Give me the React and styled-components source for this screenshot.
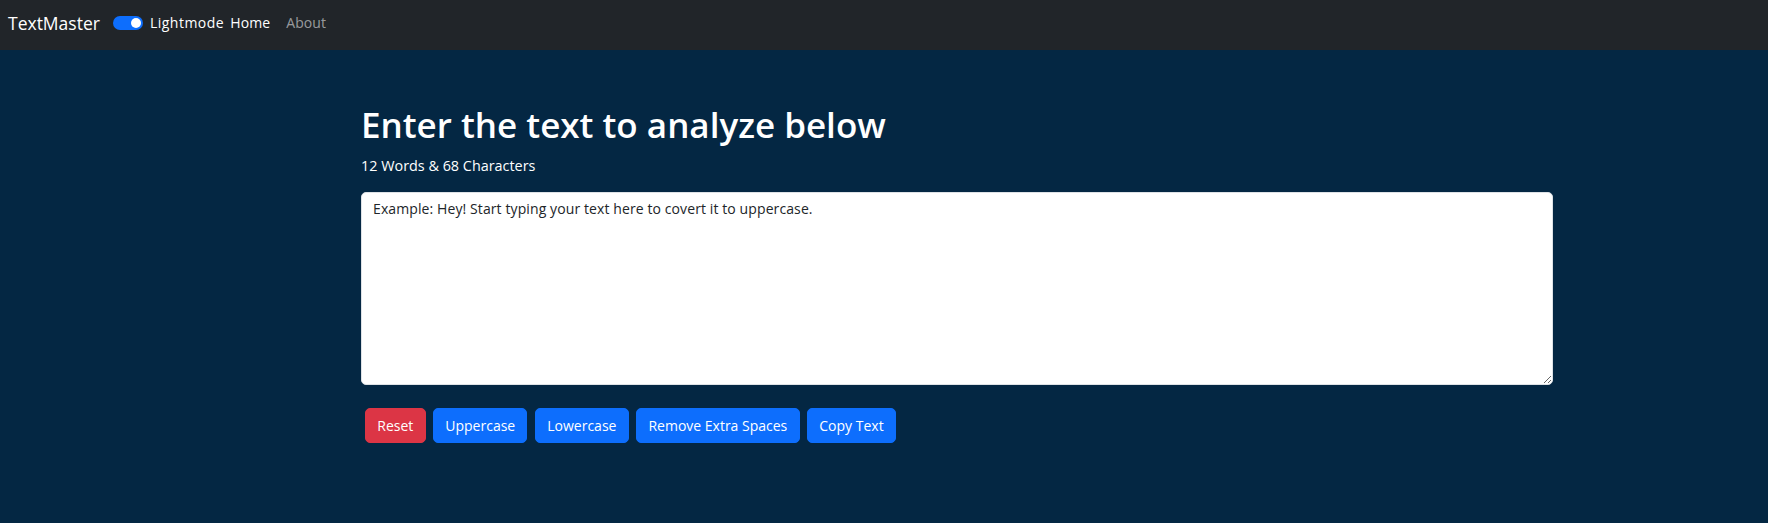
import React, { useState } from "react";
import styled, { createGlobalStyle } from "styled-components";

const GlobalStyle = createGlobalStyle`
  * { box-sizing: border-box; }
  html, body { margin: 0; padding: 0; }
  body {
    background: #042743;
    min-height: 100vh;
    font-family: "Open Sans", "Noto Sans", sans-serif;
    font-size: 14px;
    color: #ffffff;
  }
`;

const Navbar = styled.nav`
  height: 50px;
  background: #212529;
  display: flex;
  align-items: center;
  padding: 0 8px 5px;
`;

const Brand = styled.a`
  font-size: 17.5px;
  color: #ffffff;
  text-decoration: none;
  margin-right: 13px;
`;

const SwitchWrap = styled.label`
  display: flex;
  align-items: center;
  gap: 7px;
  color: #ffffff;
  font-size: 14px;
  letter-spacing: 0.5px;
  cursor: pointer;
`;

const Track = styled.span`
  position: relative;
  width: 30px;
  height: 14px;
  border-radius: 7px;
  background: ${(p) => (p.$on ? "#0d6efd" : "#ffffff")};
  display: inline-block;
`;

const Knob = styled.span`
  position: absolute;
  top: 2px;
  left: ${(p) => (p.$on ? "18px" : "2px")};
  width: 10px;
  height: 10px;
  border-radius: 50%;
  background: #ffffff;
`;

const NavList = styled.ul`
  display: flex;
  list-style: none;
  margin: 0 0 0 6px;
  padding: 0;
  gap: 16px;
`;

const NavLink = styled.a`
  font-size: 14px;
  letter-spacing: 0.1px;
  text-decoration: none;
  color: ${(p) => (p.$active ? "#ffffff" : "rgba(255,255,255,0.55)")};
`;

const Container = styled.main`
  width: 1192px;
  margin-left: 361px;
  padding-top: 54px;
`;

const Heading = styled.h1`
  margin: 0;
  font-size: 35px;
  font-weight: 600;
  line-height: 1.2;
`;

const Stats = styled.p`
  margin: 9px 0 0;
  font-size: 14.4px;
  line-height: 21px;
`;

const TextArea = styled.textarea`
  display: block;
  width: 100%;
  height: 193px;
  margin-top: 16px;
  padding: 5px 11px;
  border: 1px solid #dee2e6;
  border-radius: 5px;
  background: #ffffff;
  color: #212529;
  font-family: "Open Sans", "Noto Sans", sans-serif;
  font-size: 14px;
  line-height: 21px;
  letter-spacing: 0.1px;
  resize: vertical;
  outline: none;
`;

const ButtonRow = styled.div`
  display: flex;
  gap: 7.5px;
  margin-top: 23px;
  padding-left: 4px;
`;

const Button = styled.button`
  height: 35px;
  padding: 0 11.25px;
  border: 1px solid ${(p) => (p.$variant === "danger" ? "#dc3545" : "#0d6efd")};
  background: ${(p) => (p.$variant === "danger" ? "#dc3545" : "#0d6efd")};
  color: #ffffff;
  border-radius: 5px;
  font-family: "Open Sans", "Noto Sans", sans-serif;
  font-size: 14px;
  cursor: pointer;
`;

export default function App() {
  const [on, setOn] = useState(true);
  const [text, setText] = useState(
    "Example: Hey! Start typing your text here to covert it to uppercase."
  );
  return (
    <>
      <GlobalStyle />
      <Navbar>
        <Brand href="#">TextMaster</Brand>
        <SwitchWrap onClick={() => setOn(!on)}>
          <Track $on={on}>
            <Knob $on={on} />
          </Track>
          Lightmode
        </SwitchWrap>
        <NavList>
          <li>
            <NavLink href="#" $active>
              Home
            </NavLink>
          </li>
          <li>
            <NavLink href="#">About</NavLink>
          </li>
        </NavList>
      </Navbar>
      <Container>
        <Heading>Enter the text to analyze below</Heading>
        <Stats>12 Words &amp; 68 Characters</Stats>
        <TextArea value={text} onChange={(e) => setText(e.target.value)} />
        <ButtonRow>
          <Button $variant="danger">Reset</Button>
          <Button>Uppercase</Button>
          <Button>Lowercase</Button>
          <Button>Remove Extra Spaces</Button>
          <Button>Copy Text</Button>
        </ButtonRow>
      </Container>
    </>
  );
}
